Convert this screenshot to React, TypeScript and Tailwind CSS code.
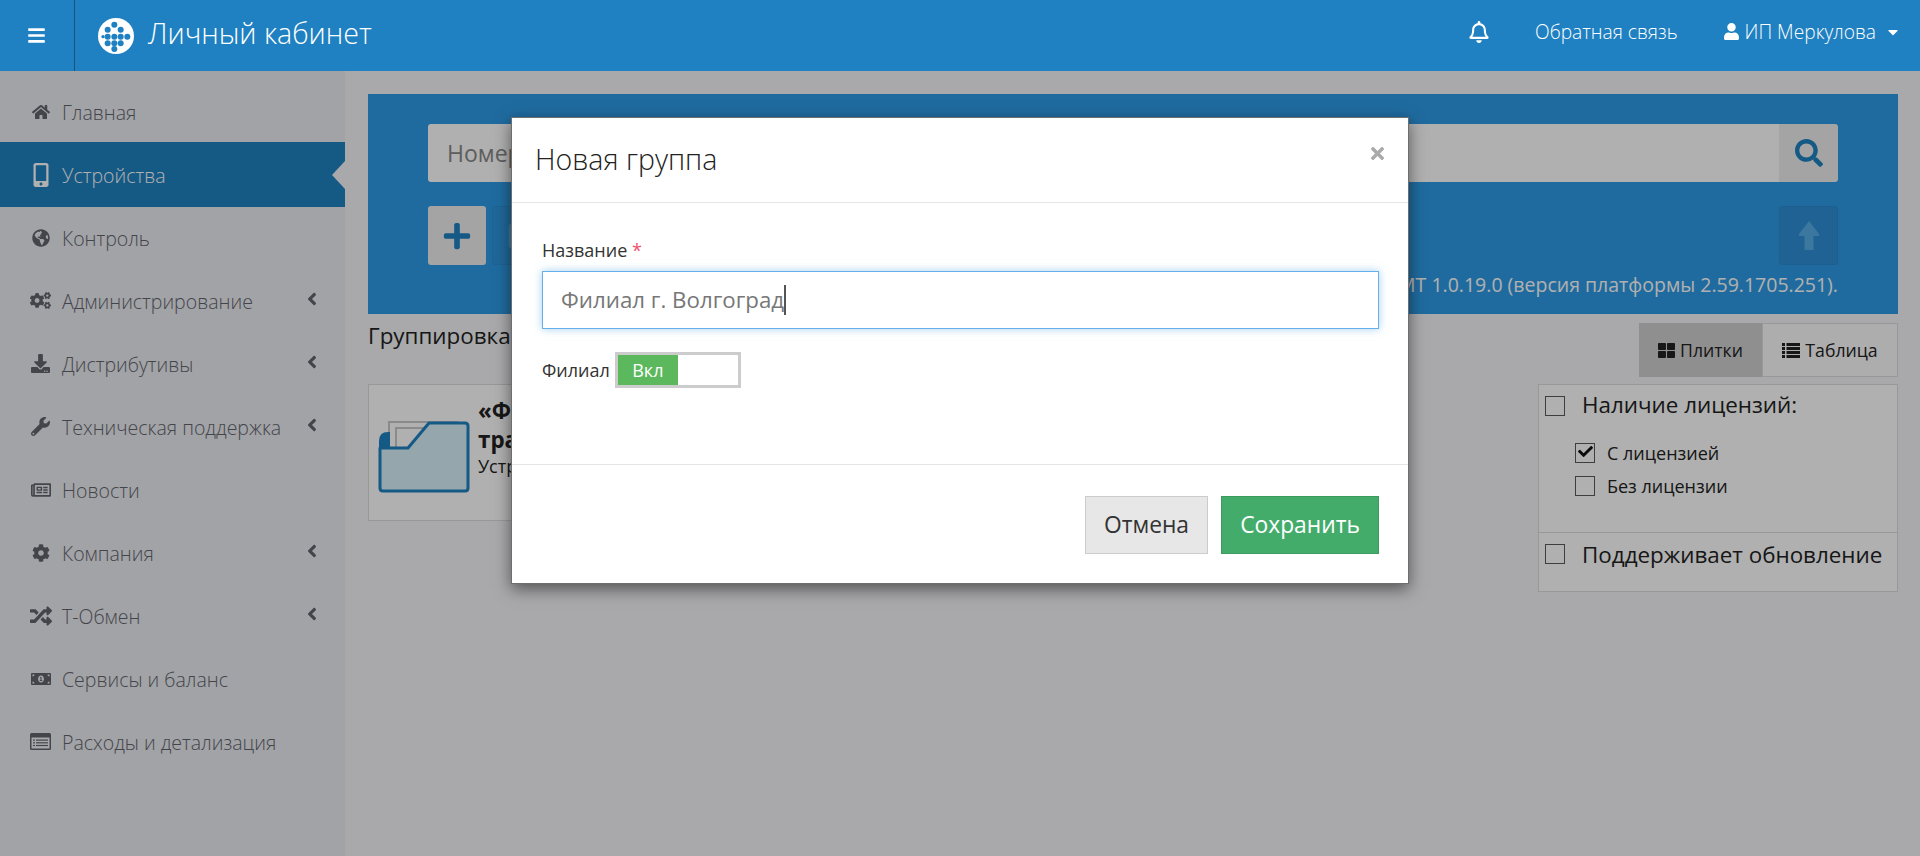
import React from 'react';
import {
  FaHome, FaMobileAlt, FaGlobeAmericas, FaCogs, FaDownload, FaWrench, FaRegNewspaper, FaCog, FaRandom,
  FaMoneyBillAlt, FaRegBell, FaUser, FaSearch, FaPlus, FaThLarge,
  FaTimes, FaAngleLeft, FaCheck, FaBars, FaCaretDown, FaRegSave,
} from 'react-icons/fa';

function ListAltIcon({ className }: { className?: string }) {
  return (
    <svg viewBox="0 0 21 17" width="21" height="17" className={className}>
      <rect x="0" y="0" width="21" height="17" rx="1.5" fill="currentColor" />
      <rect x="1.5" y="4.5" width="18" height="11" fill="#f2f3f7" />
      <rect x="3" y="6.5" width="2" height="1.2" fill="currentColor" />
      <rect x="6" y="6.5" width="12" height="1.2" fill="currentColor" />
      <rect x="3" y="9.2" width="2" height="1.2" fill="currentColor" />
      <rect x="6" y="9.2" width="12" height="1.2" fill="currentColor" />
      <rect x="3" y="11.9" width="2" height="1.2" fill="currentColor" />
      <rect x="6" y="11.9" width="12" height="1.2" fill="currentColor" />
    </svg>
  );
}

function ListIcon() {
  return (
    <svg viewBox="0 0 18 15" width="18" height="15" fill="currentColor" className="shrink-0">
      {[0, 4, 8, 12].map((y) => (
        <g key={y}>
          <rect x="0" y={y} width="3" height="3" />
          <rect x="4.5" y={y} width="13.5" height="3" />
        </g>
      ))}
    </svg>
  );
}

function UpArrow() {
  return (
    <svg viewBox="0 0 20 29" width="20" height="29" fill="currentColor">
      <path d="M10 0 L20 13 V15 H14.5 V29 H5.5 V15 H0 V13 Z" />
    </svg>
  );
}

const navItems = [
  { name: 'Главная', icon: FaHome, size: 'text-[18px]' },
  { name: 'Устройства', icon: FaMobileAlt, active: true, size: 'text-[24px]' },
  { name: 'Контроль', icon: FaGlobeAmericas, size: 'text-[18px]' },
  { name: 'Администрирование', icon: FaCogs, arrow: true, size: 'text-[21px]' },
  { name: 'Дистрибутивы', icon: FaDownload, arrow: true, size: 'text-[19px]' },
  { name: 'Техническая поддержка', icon: FaWrench, arrow: true, size: 'text-[19px]' },
  { name: 'Новости', icon: FaRegNewspaper, size: 'text-[20px]' },
  { name: 'Компания', icon: FaCog, arrow: true, size: 'text-[18px]' },
  { name: 'Т-Обмен', icon: FaRandom, arrow: true, size: 'text-[22px]' },
  { name: 'Сервисы и баланс', icon: FaMoneyBillAlt, size: 'text-[20px]' },
  { name: 'Расходы и детализация', icon: ListAltIcon, size: '' },
];

const logoDots = [
  [49, 20], [29, 35], [68, 35], [15, 56], [29, 56], [49, 56], [68, 56], [88, 56], [29, 76], [49, 76], [68, 76], [49, 93],
];

function Logo() {
  return (
    <svg width="36" height="36" viewBox="0 0 108 108" className="shrink-0">
      <circle cx="54" cy="54" r="54" fill="#fff" />
      {logoDots.map(([x, y]) => (
        <circle key={`${x}-${y}`} cx={x} cy={y} r={x === 15 ? 5 : 9} fill="#1f81c1" />
      ))}
    </svg>
  );
}

function Box({ checked }: { checked?: boolean }) {
  return (
    <span className="relative block w-[20px] h-[20px] border border-[#5a5a5a] shrink-0">
      {checked && <FaCheck className="absolute left-[2px] top-[0px] text-[15px] text-[#111]" />}
    </span>
  );
}

function FolderIcon() {
  return (
    <svg width="92" height="72" viewBox="0 0 92 72" className="shrink-0">
      <rect x="11" y="1" width="68" height="40" fill="#fff" stroke="#c8c8c8" strokeWidth="2" />
      <rect x="18" y="7" width="56" height="34" fill="#fff" stroke="#c8c8c8" strokeWidth="2" />
      <path d="M1 20 q0 -9 9 -9 h2 v24 h-11z" fill="#1f81c1" />
      <path
        d="M2 27 h28 l21 -25 h36 q3 0 3 3 v62 q0 3 -3 3 h-82 q-3 0 -3 -3z"
        fill="#d8f2fa"
        stroke="#1f81c1"
        strokeWidth="3"
        strokeLinejoin="round"
      />
    </svg>
  );
}

export default function App() {
  return (
    <div className="relative w-[1920px] h-[856px] overflow-hidden bg-[#f5f5f8] font-['Open_Sans',sans-serif] text-[#222]">
      {/* Top bar stays above the backdrop */}
      <header className="relative z-30 h-[71px] bg-[#1f81c1] flex items-center text-white">
        <div className="w-[75px] h-full border-r border-[#19527c] flex items-center justify-center pr-[1px]">
          <FaBars className="text-[19px]" />
        </div>
        <div className="ml-[23px]">
          <Logo />
        </div>
        <span className="ml-[14px] text-[28.6px] font-light leading-none -mt-[5px]">Личный кабинет</span>
        <div className="ml-auto flex items-center -mt-[7px]">
          <FaRegBell className="text-[22px] mr-[45px]" />
          <span className="text-[19.2px] font-light mr-[45px]">Обратная связь</span>
          <FaUser className="text-[17px] mr-[5px]" />
          <span className="text-[19.2px] font-light">ИП Меркулова</span>
          <FaCaretDown className="text-[16px] ml-[9px] mr-[19px]" />
        </div>
      </header>

      <div className="flex h-[785px]">
        <aside className="w-[345px] h-full bg-[#ebecf1] pt-[9px] text-[19.5px] font-light text-[#62656d]">
          {navItems.map((item) => (
            <div
              key={item.name}
              className={
                item.active
                  ? 'relative h-[65px] -my-[1px] flex items-center bg-[#1f81c1] text-white'
                  : 'relative h-[63px] flex items-center'
              }
            >
              <span className={`w-[62px] flex justify-center pl-[22px] pr-[3px] shrink-0 ${item.size}`}>
                <item.icon className="shrink-0" />
              </span>
              <span className="whitespace-nowrap pt-[2px]">{item.name}</span>
              {item.arrow && <FaAngleLeft className="absolute left-[302px] text-[20px] top-[20px]" />}
              {item.active && (
                <span className="absolute right-0 top-[19px] w-0 h-0 border-y-[14px] border-y-transparent border-r-[13px] border-r-[#f5f5f8]" />
              )}
            </div>
          ))}
        </aside>

        <main className="flex-1 min-w-0 pl-[23px] pr-[22px] pt-[23px]">
          <section className="h-[220px] bg-[#2d9be6] px-[60px] pt-[30px] text-white">
            <div className="flex h-[58px]">
              <div className="flex-1 bg-white rounded-l-[3px] flex items-center pl-[19px] text-[23px] text-[#888]">
                Номер
              </div>
              <div className="w-[59px] bg-[#eeeeee] rounded-r-[3px] flex items-center justify-center text-[#1f81c1]">
                <FaSearch className="text-[28px]" />
              </div>
            </div>
            <div className="flex mt-[24px] gap-[6px]">
              <div className="w-[58px] h-[59px] bg-[#eeeeee] rounded-[3px] flex items-center justify-center text-[#1f81c1]">
                <FaPlus className="text-[30px]" />
              </div>
              <div className="w-[58px] h-[59px] bg-[#2d96df] border border-[#2a8ed4] rounded-[3px] flex items-center justify-center text-[#5cb1ea]">
                <FaRegSave className="text-[28px]" />
              </div>
              <div className="ml-auto w-[59px] h-[59px] bg-[#2d8fd6] border border-[#2a8acf] rounded-[3px] flex items-center justify-center text-[#57ade8]">
                <UpArrow />
              </div>
            </div>
            <p className="mt-[7px] text-right text-[19.5px] leading-[25px] whitespace-nowrap">
              МТ 1.0.19.0 (версия платформы 2.59.1705.251).
            </p>
          </section>

          <div className="flex items-start justify-between h-[70px]">
            <span className="mt-[8px] text-[22.4px] leading-[28px]">Группировка</span>
            <div className="mt-[9px] flex h-[54px] text-[17.7px]">
              <div className="w-[123px] bg-[#d0d0d0] flex items-center justify-center gap-[5px]">
                <FaThLarge className="text-[17px]" />
                Плитки
              </div>
              <div className="w-[136px] bg-[#fbfbfb] border border-[#ddd] flex items-center justify-center gap-[5px]">
                <ListIcon />
                Таблица
              </div>
            </div>
          </div>

          <div className="flex items-start justify-between">
            <div className="w-[560px] h-[137px] border border-[#ddd] bg-white flex pl-[9px]">
              <div className="pt-[36px]">
                <FolderIcon />
              </div>
              <div className="ml-[8px] pt-[11px]">
                <p className="text-[22.4px] font-bold leading-[29px]">«Филиал»</p>
                <p className="text-[22.4px] font-bold leading-[29px]">транспорт</p>
                <p className="text-[18px] leading-[24px]">Устройств: 0</p>
              </div>
            </div>
            <div className="w-[360px] text-[#222]">
              <div className="h-[149px] border border-[#ddd] bg-white pl-[6px] pt-[11px]">
                <div className="flex items-center gap-[17px] text-[22.4px] leading-[20px]">
                  <Box />
                  <span className="-mt-[2px]">Наличие лицензий:</span>
                </div>
                <div className="mt-[27px] ml-[30px] flex items-center gap-[12px] text-[18px] leading-[20px]">
                  <Box checked />
                  С лицензией
                </div>
                <div className="mt-[13px] ml-[30px] flex items-center gap-[12px] text-[18px] leading-[20px]">
                  <Box />
                  Без лицензии
                </div>
              </div>
              <div className="h-[59px] border border-t-0 border-[#ddd] bg-white pl-[6px] pt-[11px] flex items-start gap-[17px] text-[22.4px] leading-[20px]">
                <Box />
                <span className="mt-[1px]">Поддерживает обновление</span>
              </div>
            </div>
          </div>
        </main>
      </div>

      {/* Backdrop */}
      <div className="absolute inset-x-0 bottom-0 top-[71px] z-10 bg-black/[.31]" />

      {/* Dialog */}
      <div className="absolute z-20 left-[511px] top-[117px] w-[898px] h-[467px] bg-white border border-[#6e6e6e] shadow-[0_5px_15px_rgba(0,0,0,0.5)] flex flex-col">
        <div className="relative h-[85px] shrink-0 border-b border-[#e5e5e5] pl-[23px] flex items-center">
          <h2 className="text-[28.5px] font-light leading-none text-[#222] -mt-[2px]">Новая группа</h2>
          <FaTimes className="absolute left-[856px] top-[26px] text-[19px] text-[#aaa]" />
        </div>
        <div className="flex-1 pl-[30px] pr-[29px] pt-[35px]">
          <label className="block text-[18px] leading-[24px] text-[#333]">
            Название <span className="text-[#f0506e]">*</span>
          </label>
          <div className="mt-[9px] h-[58px] border border-[#66afe9] shadow-[0_0_8px_rgba(102,175,233,0.6)] pl-[18px] flex items-center text-[22.3px] text-[#777]">
            Филиал г. Волгоград
            <span className="inline-block w-[2px] h-[30px] bg-[#555]" />
          </div>
          <div className="mt-[23px] flex items-center">
            <span className="text-[18px] text-[#333] mr-[5px]">Филиал</span>
            <div className="w-[126px] h-[36px] border-[3px] border-[#ccc] flex">
              <div className="w-[60px] bg-[#5cb85c] text-white text-[18px] font-medium flex items-center justify-center">
                Вкл
              </div>
            </div>
          </div>
        </div>
        <div className="h-[119px] shrink-0 border-t border-[#e5e5e5] pr-[29px] pt-[31px] flex justify-end gap-[13px] text-[22.8px]">
          <div className="w-[123px] h-[58px] bg-[#e7e7e7] border border-[#ccc] text-[#333] flex items-center justify-center">
            Отмена
          </div>
          <div className="w-[158px] h-[58px] bg-[#43ac6a] border border-[#3c9a5f] text-white flex items-center justify-center">
            Сохранить
          </div>
        </div>
      </div>
    </div>
  );
}
